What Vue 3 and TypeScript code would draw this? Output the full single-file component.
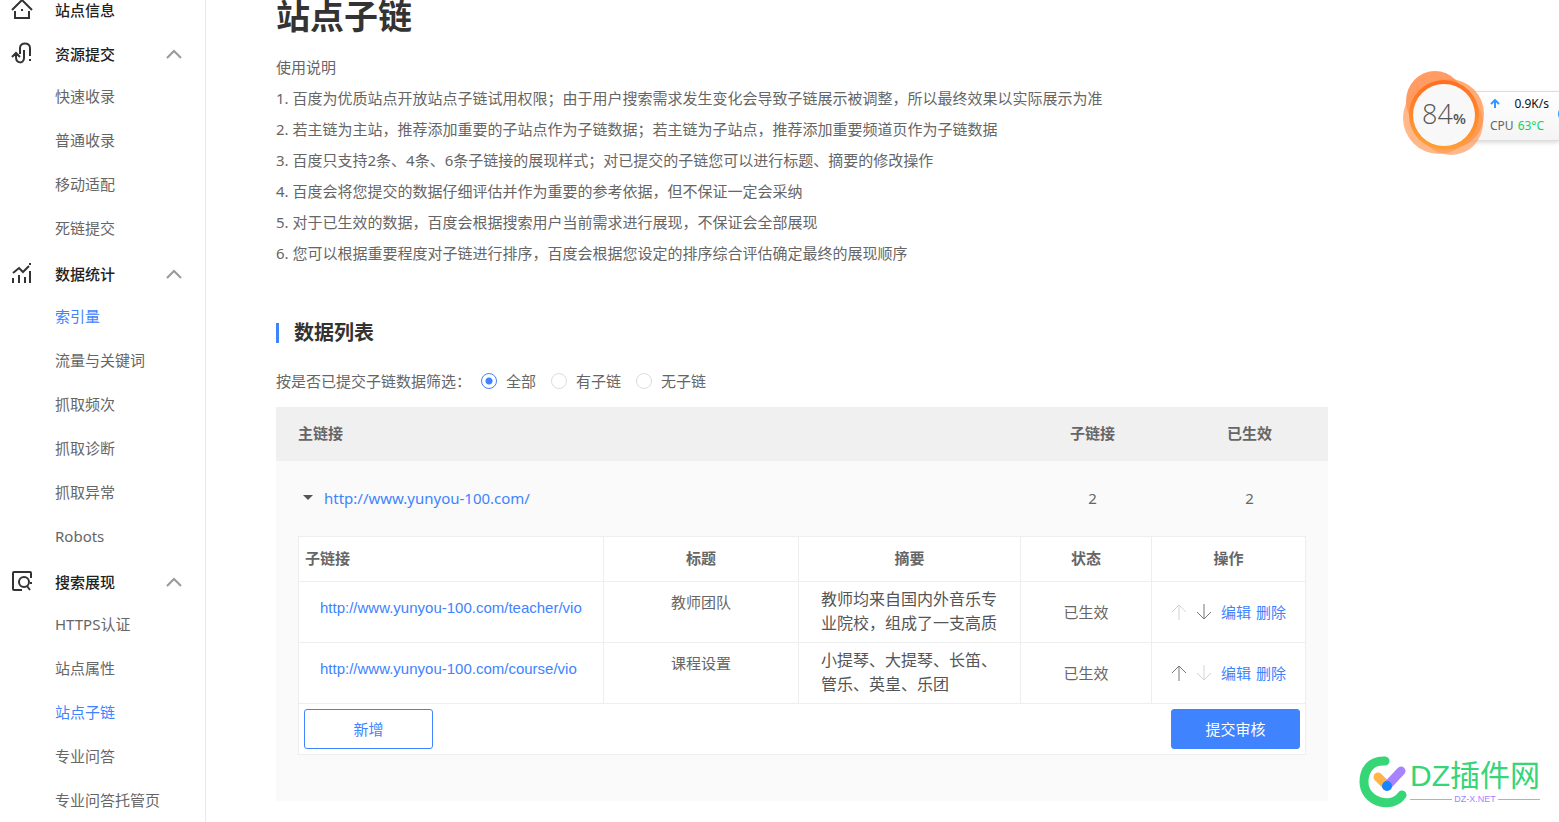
<script setup lang="ts">
import { ref } from 'vue'

interface NavItem {
  label: string
  active?: boolean
}
interface NavGroup {
  icon: 'submit' | 'stats' | 'search'
  title: string
  items: NavItem[]
}
interface SubLink {
  url: string
  title: string
  summary: string
  status: string
}

const groups: NavGroup[] = [
  {
    icon: 'submit',
    title: '资源提交',
    items: [{ label: '快速收录' }, { label: '普通收录' }, { label: '移动适配' }, { label: '死链提交' }],
  },
  {
    icon: 'stats',
    title: '数据统计',
    items: [
      { label: '索引量', active: true },
      { label: '流量与关键词' },
      { label: '抓取频次' },
      { label: '抓取诊断' },
      { label: '抓取异常' },
      { label: 'Robots' },
    ],
  },
  {
    icon: 'search',
    title: '搜索展现',
    items: [
      { label: 'HTTPS认证' },
      { label: '站点属性' },
      { label: '站点子链', active: true },
      { label: '专业问答' },
      { label: '专业问答托管页' },
    ],
  },
]

const notes: string[] = [
  '1. 百度为优质站点开放站点子链试用权限；由于用户搜索需求发生变化会导致子链展示被调整，所以最终效果以实际展示为准',
  '2. 若主链为主站，推荐添加重要的子站点作为子链数据；若主链为子站点，推荐添加重要频道页作为子链数据',
  '3. 百度只支持2条、4条、6条子链接的展现样式；对已提交的子链您可以进行标题、摘要的修改操作',
  '4. 百度会将您提交的数据仔细评估并作为重要的参考依据，但不保证一定会采纳',
  '5. 对于已生效的数据，百度会根据搜索用户当前需求进行展现，不保证会全部展现',
  '6. 您可以根据重要程度对子链进行排序，百度会根据您设定的排序综合评估确定最终的展现顺序',
]

const filters = [
  { value: 'all', label: '全部' },
  { value: 'with', label: '有子链' },
  { value: 'without', label: '无子链' },
]
const filter = ref('all')

const subLinks: SubLink[] = [
  {
    url: 'http://www.yunyou-100.com/teacher/vio',
    title: '教师团队',
    summary: '教师均来自国内外音乐专业院校，组成了一支高质',
    status: '已生效',
  },
  {
    url: 'http://www.yunyou-100.com/course/vio',
    title: '课程设置',
    summary: '小提琴、大提琴、长笛、管乐、英皇、乐团',
    status: '已生效',
  },
]
</script>

<template>
  <div class="shell">
    <nav class="sidebar">
      <a class="home" href="#">
        <svg class="icon" viewBox="0 0 22 22" aria-hidden="true">
          <path d="M1 12 11 2l10 10M4 13v7h14v-7" />
          <path class="dot" d="M10 11h2v2h-2z" />
        </svg>
        <span>站点信息</span>
      </a>
      <section v-for="group in groups" :key="group.title" class="group">
        <button type="button" class="group-head">
          <svg v-if="group.icon === 'submit'" class="icon" viewBox="0 0 22 22" aria-hidden="true">
            <path d="M1 15l4-4 4 4M5 12v3c0 7 8 7 8 1V8M9 12V6c0-6 10-6 10 0v8" />
            <path class="dot" d="M18 17h2v2h-2z" />
          </svg>
          <svg v-else-if="group.icon === 'stats'" class="icon" viewBox="0 0 22 22" aria-hidden="true">
            <path d="M2 11l6-5 4 4 6-6M2 16v5M8 13v8M14 15v6M19 9v12" />
            <path class="dot" d="M18 1h2v2h-2z" />
          </svg>
          <svg v-else class="icon" viewBox="0 0 22 22" aria-hidden="true">
            <path d="M11 20H3q-1 0-1-1V3q0-1 1-1h16q1 0 1 1v5M16 16l3 4" />
            <circle cx="13" cy="12" r="5" />
            <path class="dot" d="M19 12h2v2h-2z" />
          </svg>
          <span>{{ group.title }}</span>
          <svg class="chevron" viewBox="0 0 16 10" aria-hidden="true"><path d="M1 9l7-7 7 7" /></svg>
        </button>
        <ul>
          <li v-for="item in group.items" :key="item.label">
            <a href="#" :class="{ active: item.active }">{{ item.label }}</a>
          </li>
        </ul>
      </section>
    </nav>

    <main class="main">
      <h1>站点子链</h1>
      <div class="notes">
        <p>使用说明</p>
        <p v-for="note in notes" :key="note">{{ note }}</p>
      </div>

      <h2>数据列表</h2>
      <div class="filters" role="radiogroup" aria-labelledby="filter-label">
        <span id="filter-label" class="filter-label">按是否已提交子链数据筛选：</span>
        <label v-for="option in filters" :key="option.value">
          <input v-model="filter" type="radio" name="filter" :value="option.value" />
          <span>{{ option.label }}</span>
        </label>
      </div>

      <table class="outer">
        <colgroup>
          <col />
          <col class="count" />
          <col class="count" />
        </colgroup>
        <thead>
          <tr>
            <th class="first">主链接</th>
            <th>子链接</th>
            <th>已生效</th>
          </tr>
        </thead>
        <tbody>
          <tr class="site">
            <td class="first">
              <span class="site-link">
                <svg class="caret" viewBox="0 0 10 5" aria-hidden="true"><path d="M0 0h10L5 5z" /></svg>
                <a href="#">http://www.yunyou-100.com/</a>
              </span>
            </td>
            <td>2</td>
            <td>2</td>
          </tr>
          <tr>
            <td class="nested" colspan="3">
              <table class="inner">
                <colgroup>
                  <col class="c-url" />
                  <col class="c-title" />
                  <col class="c-summary" />
                  <col class="c-status" />
                  <col class="c-action" />
                </colgroup>
                <thead>
                  <tr>
                    <th class="left">子链接</th>
                    <th>标题</th>
                    <th>摘要</th>
                    <th>状态</th>
                    <th>操作</th>
                  </tr>
                </thead>
                <tbody>
                  <tr v-for="(link, index) in subLinks" :key="link.url" class="row">
                    <td class="url"><a href="#">{{ link.url }}</a></td>
                    <td class="title">{{ link.title }}</td>
                    <td class="summary"><p>{{ link.summary }}</p></td>
                    <td>{{ link.status }}</td>
                    <td>
                      <div class="actions">
                        <button type="button" class="move" aria-label="上移" :disabled="index === 0">
                          <svg viewBox="0 0 16 16" aria-hidden="true"><path d="M8 16V1M1 8l7-7 7 7" /></svg>
                        </button>
                        <button type="button" class="move" aria-label="下移" :disabled="index === subLinks.length - 1">
                          <svg viewBox="0 0 16 16" aria-hidden="true"><path d="M8 0v15M1 8l7 7 7-7" /></svg>
                        </button>
                        <a href="#">编辑</a>
                        <a href="#">删除</a>
                      </div>
                    </td>
                  </tr>
                </tbody>
                <tfoot>
                  <tr>
                    <td colspan="5">
                      <div class="foot">
                        <button type="button" class="btn">新增</button>
                        <button type="button" class="btn primary">提交审核</button>
                      </div>
                    </td>
                  </tr>
                </tfoot>
              </table>
            </td>
          </tr>
        </tbody>
      </table>
    </main>

    <aside class="monitor">
      <svg class="ring" viewBox="0 0 84 88" aria-hidden="true">
        <defs>
          <linearGradient id="ring-fill" x1="0" y1="0" x2="0" y2="1">
            <stop offset="0" stop-color="#ff6a1c" />
            <stop offset="1" stop-color="#ffa030" />
          </linearGradient>
        </defs>
        <ellipse cx="33" cy="31" rx="29" ry="30" fill="#ff8a48" opacity=".85" />
        <circle cx="37" cy="48" r="36" fill="#ff9a58" opacity=".7" />
        <circle cx="49" cy="53" r="32" fill="#ff9a58" opacity=".7" />
        <circle cx="47" cy="44" r="35" fill="#ff9048" opacity=".75" />
        <circle cx="42" cy="45" r="35" fill="url(#ring-fill)" opacity=".9" />
        <circle cx="42" cy="45" r="31" fill="#f8f8f8" />
      </svg>
      <div class="usage"><span>84</span><small>%</small></div>
      <div class="stats">
        <div class="stat">
          <svg class="up" viewBox="0 0 10 10" aria-hidden="true"><path d="M5 9V2M1 5l4-4 4 4" /></svg>
          <span class="speed">0.9K/s</span>
        </div>
        <div class="stat"><span class="cpu">CPU</span><span class="temp">63°C</span></div>
      </div>
      <i class="knob"></i>
    </aside>

    <div class="brand">
      <svg viewBox="0 0 50 52" aria-hidden="true">
        <path d="M26 5C11 4 5 15 5 26c0 20 28 28 38 13" fill="none" stroke="#36d576" stroke-width="9" stroke-linecap="round" />
        <path d="M19 21l9 9" stroke="#ffb545" stroke-width="9" stroke-linecap="round" />
        <path d="M42 15 28 30" stroke="#a783ff" stroke-width="9" stroke-linecap="round" />
        <circle cx="28" cy="30" r="5" fill="#1685ff" />
      </svg>
      <div class="brand-text">
        <strong>DZ插件网</strong>
        <small>DZ-X.NET</small>
      </div>
    </div>
  </div>
</template>

<style>
body {
  margin: 0;
  background: #fff;
}
</style>

<style scoped>
* {
  box-sizing: border-box;
}
.shell {
  position: relative;
  display: flex;
  height: 100vh;
  overflow: hidden;
  color: #666;
  font: 15px/22px 'Noto Sans', 'Noto Sans CJK SC', sans-serif;
}
a {
  color: #4083ff;
  text-decoration: none;
}
button {
  font: inherit;
  cursor: pointer;
}
h1,
h2,
p,
ul {
  margin: 0;
  padding: 0;
}

/* Sidebar */
.sidebar {
  flex: none;
  width: 206px;
  border-right: 1px solid #e8e8e8;
}
.home,
.group-head {
  display: flex;
  align-items: center;
  width: 100%;
  padding: 0 23px 0 11px;
  color: #222;
  font-weight: 500;
}
.home {
  height: 32px;
  padding-bottom: 12px;
}
.group-head {
  height: 42px;
  padding-top: 2px;
  border: 0;
  background: none;
}
.icon {
  width: 22px;
  height: 22px;
  margin-right: 22px;
  fill: none;
  stroke: #333;
  stroke-width: 2;
}
.group-head .icon {
  margin-bottom: 2px;
}
.home .icon {
  margin-bottom: 2px;
}
.icon .dot {
  fill: #333;
  stroke: none;
}
.chevron {
  width: 16px;
  height: 10px;
  margin-left: auto;
  fill: none;
  stroke: #999;
  stroke-width: 2;
}
.group ul {
  padding-bottom: 2px;
  list-style: none;
}
.group li a {
  display: block;
  padding-left: 55px;
  color: #666;
  line-height: 44px;
}
.group li a.active {
  color: #4083ff;
}

/* Content */
.main {
  flex: 1;
  min-width: 0;
  padding: 0 231px 0 70px;
}
h1 {
  color: #333;
  font-size: 34px;
  line-height: 32px;
}
.notes {
  margin-top: 20px;
  line-height: 31px;
  white-space: nowrap;
}
h2 {
  margin-top: 54px;
  padding-left: 15px;
  border-left: 3px solid #4083ff;
  color: #333;
  font-size: 20px;
  line-height: 20px;
}
.filters {
  display: flex;
  align-items: center;
  gap: 15px;
  margin: 26px 0 14px;
  line-height: 24px;
}
.filter-label {
  margin-right: -5px;
}
.filters label {
  display: flex;
  align-items: center;
  gap: 9px;
}
.filters input {
  width: 16px;
  height: 16px;
  margin: 0;
  border: 1px solid #ddd;
  border-radius: 50%;
  appearance: none;
}
.filters input:checked {
  border-color: #4083ff;
  background: radial-gradient(circle, #4083ff 3px, #fff 4px);
}

/* Tables */
table {
  width: 100%;
  border-collapse: collapse;
  table-layout: fixed;
}
th,
td {
  padding: 0;
  text-align: center;
}
th {
  font-weight: 700;
}
.outer {
  background: #fafafa;
}
.count {
  width: 157px;
}
.outer > thead th {
  height: 54px;
  padding-bottom: 2px;
  background: #f0f0f0;
}
.outer .first {
  padding-left: 22px;
  text-align: left;
}
.site td {
  height: 75px;
  padding-bottom: 2px;
}
.site-link {
  display: flex;
  align-items: center;
  gap: 11px;
  padding-left: 5px;
}
.caret {
  width: 10px;
  height: 5px;
  fill: #555;
}
.outer .nested {
  padding: 0 23px 46px 22px;
}
.inner {
  background: #fff;
}
.inner th,
.inner td {
  border: 1px solid #eee;
}
.inner th {
  height: 45px;
  padding-bottom: 2px;
}
.inner .left {
  padding-left: 6px;
  text-align: left;
}
.c-url {
  width: 305px;
}
.c-title {
  width: 195px;
}
.c-summary {
  width: 222px;
}
.c-status {
  width: 131px;
}
.c-action {
  width: 154px;
}
.row td {
  height: 61px;
  padding-bottom: 1px;
}
.row .url {
  padding: 15px 20px 0 21px;
  text-align: left;
  vertical-align: top;
}
.url a {
  display: block;
  font-family: 'Liberation Sans', sans-serif;
  white-space: nowrap;
}
.row .title {
  padding-top: 9px;
  vertical-align: top;
}
.row .summary {
  padding: 5px 22px 0;
  text-align: left;
  vertical-align: top;
}
.summary p {
  height: 48px;
  color: #555;
  font-size: 16px;
  line-height: 24px;
}
.actions {
  display: flex;
  align-items: center;
  justify-content: center;
  gap: 5px;
}
.move {
  width: 16px;
  height: 16px;
  margin-right: 4px;
  padding: 0;
  border: 0;
  background: none;
}
.move svg {
  display: block;
  width: 16px;
  height: 16px;
  fill: none;
  stroke: #777;
}
.move:disabled svg {
  stroke: #d4d4d4;
}
.foot {
  display: flex;
  justify-content: space-between;
  padding: 5px;
}
.btn {
  width: 129px;
  height: 40px;
  border: 1px solid #4083ff;
  border-radius: 3px;
  background: #fff;
  color: #4083ff;
}
.btn.primary {
  background: #4083ff;
  color: #fff;
}

/* Floating system monitor */
.monitor {
  position: absolute;
  top: 70px;
  right: 0;
  width: 157px;
  height: 88px;
}
.ring {
  position: absolute;
  z-index: 1;
  top: 0;
  left: 0;
  width: 84px;
  height: 88px;
}
.usage {
  position: absolute;
  z-index: 1;
  top: 29px;
  left: 0;
  display: flex;
  align-items: baseline;
  justify-content: center;
  width: 84px;
  color: #555;
  font-family: 'Open Sans', sans-serif;
  font-size: 27px;
  font-weight: 300;
  line-height: 30px;
}
.usage small {
  font-size: 15px;
  font-weight: 600;
}
.stats {
  position: absolute;
  top: 21px;
  right: 0;
  width: 97px;
  height: 50px;
  padding: 1px 10px 0 27px;
  border: 1px solid #ddd;
  border-right: 0;
  background: linear-gradient(#fff, #f4f4f4);
  box-shadow: 0 2px 4px #ddd;
  font-size: 12px;
  line-height: 22px;
}
.stat {
  display: flex;
  align-items: center;
  gap: 4px;
}
.up {
  width: 10px;
  height: 10px;
  fill: none;
  stroke: #3399ff;
  stroke-width: 2;
}
.speed {
  margin-left: auto;
  color: #111;
}
.temp {
  color: #0bd65b;
}
.knob {
  position: absolute;
  top: 36px;
  right: -15px;
  width: 16px;
  height: 16px;
  border-radius: 50%;
  background: #3399ff;
}

/* Brand mark */
.brand {
  position: absolute;
  right: 19px;
  bottom: 14px;
  display: flex;
  gap: 1px;
}
.brand svg {
  width: 50px;
  height: 52px;
}
.brand-text {
  display: flex;
  flex-direction: column;
  color: #36d576;
  font-family: 'Liberation Sans', 'Noto Sans CJK SC', sans-serif;
}
.brand strong {
  font-size: 30px;
  font-weight: 400;
  line-height: 40px;
}
.brand small {
  display: flex;
  align-items: center;
  gap: 2px;
  color: #a783ff;
  font-size: 9px;
  line-height: 7px;
}
.brand small::before,
.brand small::after {
  flex: 1;
  height: 1px;
  background: #b9a0ff;
  content: '';
}
</style>
